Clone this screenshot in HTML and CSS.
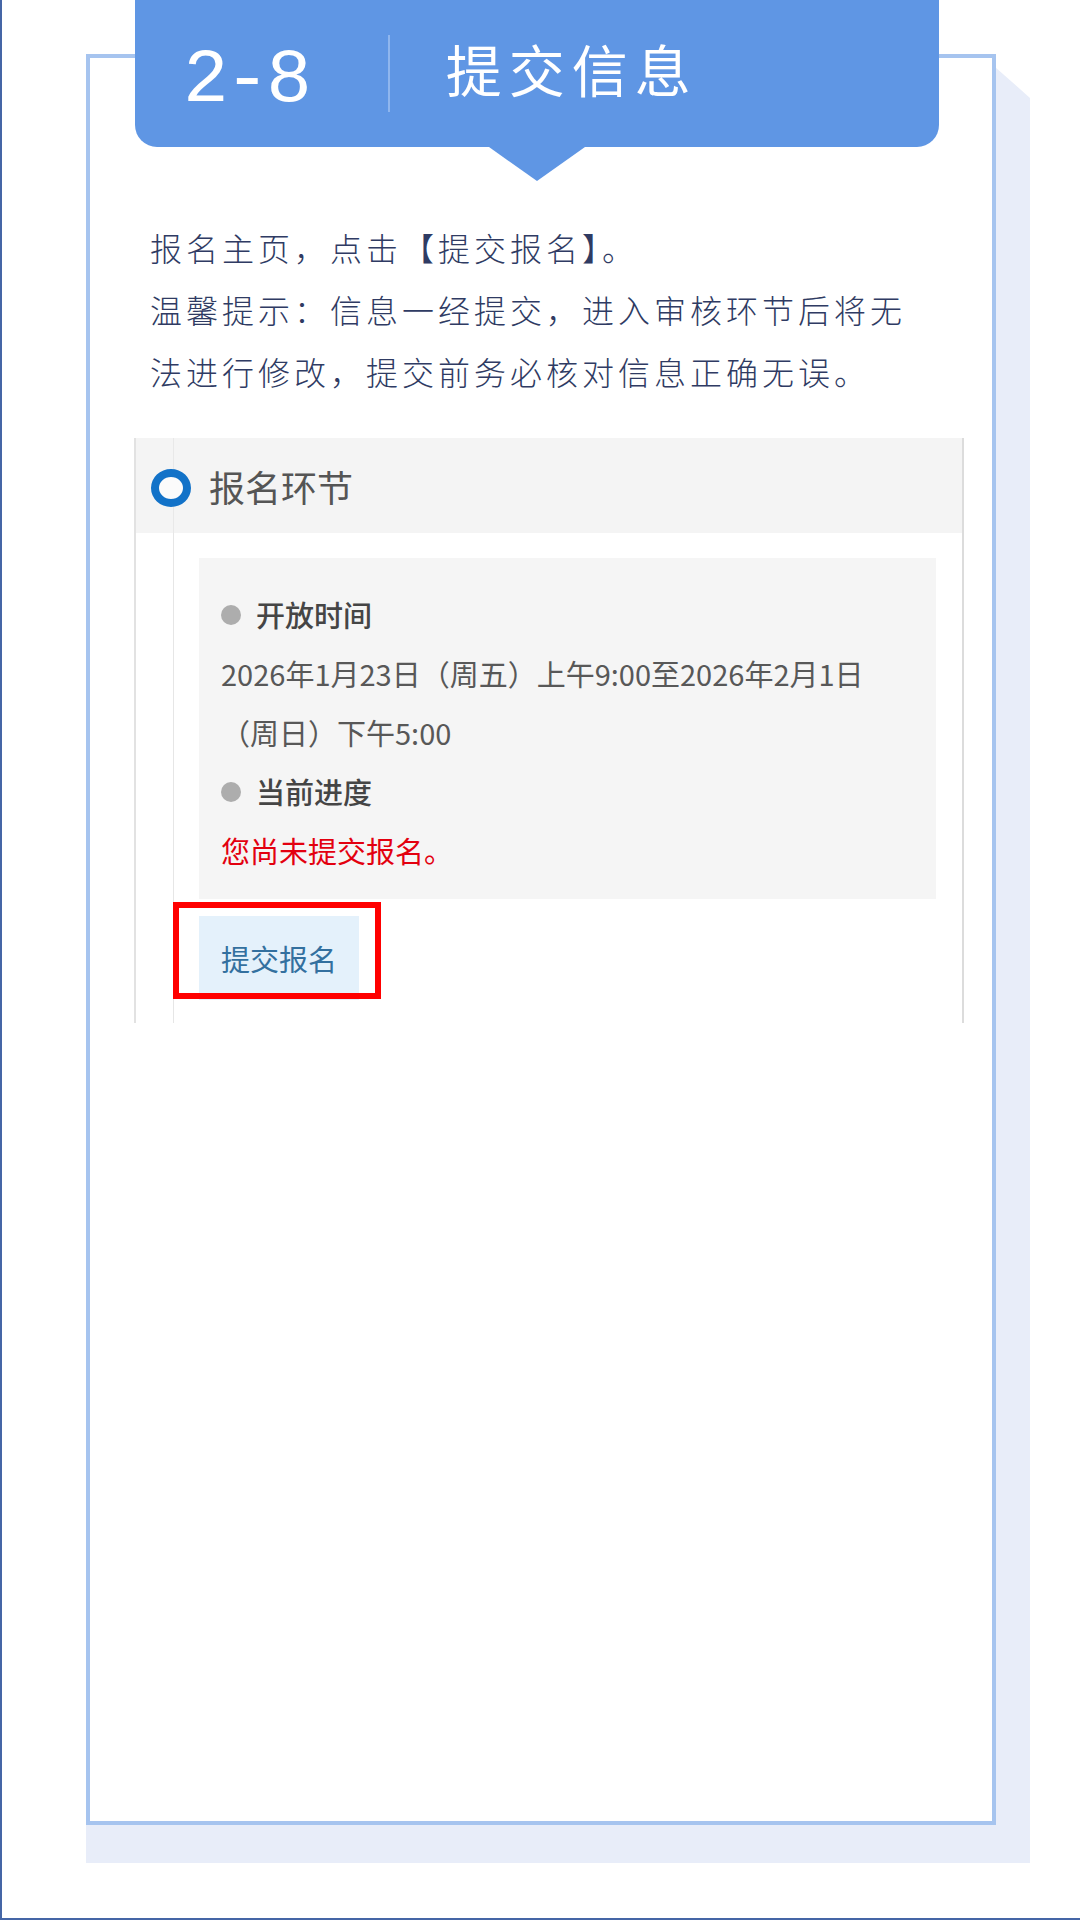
FILE: index.html
```html
<!DOCTYPE html>
<html lang="zh-CN">
<head>
<meta charset="utf-8">
<title>2-8 提交信息</title>
<link rel="stylesheet" href="styles.css">
</head>
<body>
<div class="page">
  <div class="card">
    <div class="tab">
      <span class="num">2-8</span>
      <span class="divider"></span>
      <span class="title">提交信息</span>
    </div>
    <p class="intro">报名主页，点击【提交报名】。<br>温馨提示：信息一经提交，进入审核环节后将无<br>法进行修改，提交前务必核对信息正确无误。</p>
    <div class="panel">
      <div class="panel-head">
        <span class="ring"></span>
        <span class="panel-title">报名环节</span>
      </div>
      <div class="info">
        <div class="label"><span class="dot"></span>开放时间</div>
        <div class="value">2026年1月23日（周五）上午9:00至2026年2月1日<br>（周日）下午5:00</div>
        <div class="label"><span class="dot"></span>当前进度</div>
        <div class="warn">您尚未提交报名。</div>
      </div>
      <div class="btn-wrap">
        <span class="btn">提交报名</span>
        <span class="highlight"></span>
      </div>
    </div>
  </div>
</div>
</body>
</html>
```

FILE: styles.css
```css
html, body {
  margin: 0;
  padding: 0;
  background: #fff;
}

.page {
  position: relative;
  z-index: 0;
  width: 1080px;
  height: 1920px;
  box-sizing: border-box;
  border-left: 2px solid #4566a6;
  border-bottom: 2px solid #4566a6;
  padding: 54px 0 0 84px;
  background: #fff;
  font-family: "Noto Sans CJK SC", "Noto Sans", sans-serif;
}

.card {
  position: relative;
  width: 910px;
  height: 1771px;
  box-sizing: border-box;
  border: 4px solid #a6c4ef;
  background: #fff;
}

.card::before {
  content: "";
  position: absolute;
  left: -4px;
  top: 9px;
  right: -38px;
  bottom: -42px;
  background: #e8edf9;
  z-index: -1;
  clip-path: polygon(0 0, calc(100% - 35px) 0, 100% 31px, 100% 100%, 0 100%);
}

.tab {
  position: relative;
  height: 147px;
  margin: -58px 53px 0 45px;
  box-sizing: border-box;
  padding-left: 48px;
  display: flex;
  align-items: center;
  background: #5f96e4;
  border-radius: 0 0 22px 22px;
  color: #fff;
}

.tab::after {
  content: "";
  position: absolute;
  left: 50%;
  top: 100%;
  transform: translateX(-50%);
  border-left: 48px solid transparent;
  border-right: 48px solid transparent;
  border-top: 34px solid #5f96e4;
}

.num {
  font-family: "Liberation Mono", monospace;
  font-size: 76px;
  letter-spacing: -4px;
  line-height: 1;
  padding-top: 14px;
}

.divider {
  width: 2px;
  height: 77px;
  margin-left: 80px;
  background: #8fb6ee;
}

.title {
  margin-left: 56px;
  font-size: 56px;
  letter-spacing: 7px;
  line-height: 1;
  font-weight: 400;
  padding-bottom: 11px;
}

.intro {
  margin: 69px 0 0 60px;
  font-size: 32px;
  line-height: 62px;
  letter-spacing: 4px;
  font-weight: 300;
  color: #2f3b63;
  white-space: nowrap;
}

.panel {
  margin: 36px 28px 0 44px;
  padding-bottom: 23px;
  border-left: 2px solid #e2e2e2;
  border-right: 2px solid #dcdcdc;
  background: linear-gradient(#e6e6e6, #e6e6e6) no-repeat 37px 0 / 1px 100%;
}

.panel-head {
  height: 95px;
  display: flex;
  align-items: center;
  background: linear-gradient(#e8e8e8, #e8e8e8) no-repeat 37px 0 / 1px 100%, #f4f4f4;
}

.ring {
  width: 40px;
  height: 38px;
  box-sizing: border-box;
  margin-left: 15px;
  margin-top: 4px;
  border: 8px solid #1272c8;
  border-radius: 50%;
  background: #fbfbfb;
}

.panel-title {
  margin-left: 18px;
  font-size: 36px;
  color: #555;
}

.info {
  margin: 25px 26px 0 63px;
  padding: 27px 22px 19px;
  background: #f5f5f5;
  font-size: 29px;
  line-height: 59px;
  color: #585858;
  white-space: nowrap;
}

.label {
  display: flex;
  align-items: center;
  color: #454545;
  font-weight: 500;
}

.dot {
  width: 20px;
  height: 20px;
  margin-right: 15px;
  border-radius: 50%;
  background: #adadad;
}

.warn {
  color: #e3000f;
}

.btn-wrap {
  position: relative;
  width: fit-content;
  margin: 17px 0 0 63px;
}

.btn {
  display: block;
  height: 84px;
  line-height: 84px;
  padding: 0 22px;
  background: #e4f1fb;
  color: #33709f;
  font-size: 29px;
}

.highlight {
  position: absolute;
  left: -26px;
  top: -14px;
  width: 208px;
  height: 97px;
  box-sizing: border-box;
  border: 6px solid #f00;
}
```
